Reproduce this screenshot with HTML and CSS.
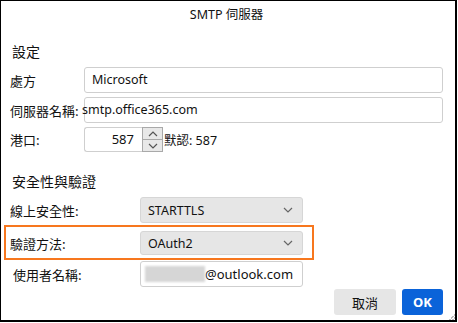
FILE: index.html
```html
<!DOCTYPE html>
<html lang="zh-Hant">
<head>
    <meta charset="UTF-8">
    <title>SMTP 伺服器</title>
    <link rel="stylesheet" href="styles.css">
</head>
<body>
    <div class="dialog">
        <div class="dialog-title">SMTP 伺服器</div>

        <div class="section-title">設定</div>
        <div class="row row-wide">
            <span class="label">處方</span>
            <div class="field">Microsoft</div>
        </div>
        <div class="row row-wide">
            <span class="label">伺服器名稱:</span>
            <div class="field field-overflow">smtp.office365.com</div>
        </div>
        <div class="row row-wide row-port">
            <span class="label">港口:</span>
            <div class="port">
                <div class="port-value">587</div>
                <div class="spinner">
                    <div class="spin-btn">
                        <svg width="10" height="6" viewBox="0 0 10 6"><polyline points="1,5 5,1 9,5" fill="none" stroke="#555" stroke-width="1.2"/></svg>
                    </div>
                    <div class="spin-btn">
                        <svg width="10" height="6" viewBox="0 0 10 6"><polyline points="1,1 5,5 9,1" fill="none" stroke="#555" stroke-width="1.2"/></svg>
                    </div>
                </div>
                <span class="port-default">默認: 587</span>
            </div>
        </div>

        <div class="section-title section-security">安全性與驗證</div>
        <div class="row row-narrow">
            <span class="label">線上安全性:</span>
            <div class="select">
                <span>STARTTLS</span>
                <svg width="10" height="6" viewBox="0 0 10 6"><polyline points="1,1 5,5 9,1" fill="none" stroke="#666" stroke-width="1.2"/></svg>
            </div>
        </div>
        <div class="highlight">
            <div class="row row-narrow row-auth">
                <span class="label">驗證方法:</span>
                <div class="select select-auth">
                    <span>OAuth2</span>
                    <svg width="10" height="6" viewBox="0 0 10 6"><polyline points="1,1 5,5 9,1" fill="none" stroke="#666" stroke-width="1.2"/></svg>
                </div>
            </div>
        </div>
        <div class="row row-narrow row-user">
            <span class="label label-user">使用者名稱:</span>
            <div class="field field-user">
                <span class="blurred"></span>
                <span>@outlook.com</span>
            </div>
        </div>

        <div class="buttons">
            <button class="btn btn-cancel">取消</button>
            <button class="btn btn-ok">OK</button>
        </div>

        <div class="grip"></div>
    </div>
</body>
</html>
```

FILE: styles.css
```css
body {
    margin: 0;
    background-color: white;
    font-family: "Noto Sans", "Noto Sans CJK TC", sans-serif;
    color: #111;
}
.dialog {
    position: relative;
    box-sizing: border-box;
    width: 457px;
    height: 322px;
    border-top: 1px solid #000;
    border-left: 1px solid #000;
    border-right: 2px solid #000;
    border-bottom: 2px solid #000;
    padding: 0 12px 0 9px;
    background-color: white;
}
.dialog-title {
    padding-top: 5px;
    line-height: 18px;
    font-size: 12.5px;
    text-align: center;
}
.section-title {
    margin-top: 18px;
    margin-left: 2px;
    line-height: 20px;
    font-size: 14px;
}
.section-security {
    margin-top: 20px;
}
.row {
    display: grid;
    align-items: center;
    margin-top: 4px;
    font-size: 13px;
}
.row-wide {
    grid-template-columns: 74px 1fr;
}
.row-narrow {
    grid-template-columns: 130px 163px;
    margin-top: 5px;
}
.section-title + .row {
    margin-top: 5px;
}
.label {
    white-space: nowrap;
    font-family: "Noto Sans CJK TC", sans-serif;
}
.field {
    box-sizing: border-box;
    height: 26px;
    line-height: 24px;
    padding-left: 7px;
    border: 1px solid #cfcfcf;
    border-radius: 3px;
    font-size: 12.5px;
    color: #111;
}
.field-overflow {
    text-indent: -10px;
}
.port {
    display: flex;
    align-items: center;
}
.port-value {
    box-sizing: border-box;
    width: 58px;
    height: 25px;
    line-height: 23px;
    padding-right: 8px;
    border: 1px solid #cfcfcf;
    border-right: none;
    border-radius: 3px 0 0 3px;
    text-align: right;
    font-size: 13px;
}
.spinner {
    display: flex;
    flex-direction: column;
    width: 21px;
    height: 25px;
}
.spin-btn {
    box-sizing: border-box;
    display: flex;
    align-items: center;
    justify-content: center;
    flex: 1;
    background-color: #e8e8e8;
    border: 1px solid #a9a9a9;
}
.spin-btn + .spin-btn {
    border-top: none;
}
.port-default {
    margin-left: 1px;
    font-size: 12.5px;
    color: #111;
}
.select {
    box-sizing: border-box;
    display: flex;
    align-items: center;
    justify-content: space-between;
    height: 26px;
    padding: 0 9px 0 7px;
    background-color: #e6e6e6;
    border: 1px solid #d6d6d6;
    border-radius: 3px;
    font-size: 12.5px;
}
.select-auth {
    height: 24px;
}
.highlight {
    box-sizing: border-box;
    width: 310px;
    height: 35px;
    margin: 2px 0 0 -6px;
    padding: 4px 0 0 4px;
    border: 2px solid #f7771e;
}
.row-auth {
    margin-top: 0;
}
.row-user {
    margin-top: 1px;
}
.label-user {
    padding-left: 3px;
}
.field-user {
    display: flex;
    align-items: center;
    padding-left: 4px;
    font-size: 13px;
}
.blurred {
    width: 60px;
    height: 16px;
    background-color: #d6d6d6;
    filter: blur(1px);
}
.buttons {
    display: flex;
    justify-content: flex-end;
    gap: 6px;
    margin-top: 2px;
}
.btn {
    height: 26px;
    border: none;
    border-radius: 3px;
    font-family: "Noto Sans", "Noto Sans CJK TC", sans-serif;
    font-size: 13px;
    padding: 0;
}
.btn-cancel {
    width: 62px;
    background-color: #e6e6e6;
    color: #111;
}
.btn-ok {
    width: 41px;
    background-color: #0a63d9;
    color: white;
    font-weight: bold;
}
.grip {
    position: absolute;
    right: 0;
    bottom: 0;
    width: 6px;
    height: 6px;
    background: linear-gradient(135deg, transparent 50%, #bbb 50%, #bbb 60%, transparent 60%, transparent 75%, #bbb 75%, #bbb 85%, transparent 85%);
}
```
